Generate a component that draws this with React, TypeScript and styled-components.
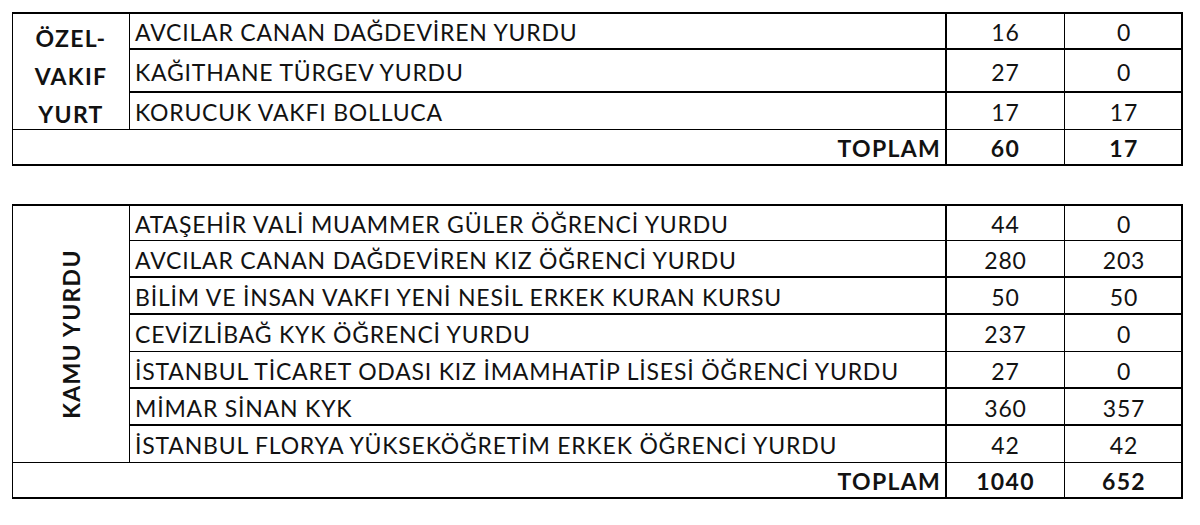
import React from "react";
import styled, { createGlobalStyle } from "styled-components";

const Global = createGlobalStyle`
  html, body { margin: 0; padding: 0; background: #fff; }
  body { font-family: Lato, "Liberation Sans", sans-serif; color: #121212; }
`;

const Page = styled.div`
  padding: 12px 0 0 12px;
  display: flex;
  flex-direction: column;
  gap: 38px;
  width: 1171px;
`;

const Grid = styled.div<{ $rows: string }>`
  display: grid;
  grid-template-columns: 117px 817px 118px 118px;
  grid-template-rows: ${(p) => p.$rows};
  border-top: 2px solid #000;
  border-left: 1px solid #000;
  border-right: 2px solid #000;
  border-bottom: 2px solid #000;
  box-sizing: border-box;
  width: 1171px;
`;

const Cell = styled.div<{ $b?: number }>`
  box-sizing: border-box;
  border-bottom: ${(p) => p.$b ?? 0}px solid #000;
  display: flex;
  align-items: center;
  font-size: 23px;
  letter-spacing: 0.8px;
  white-space: nowrap;
  overflow: hidden;
`;

const GroupCell = styled(Cell)<{ $span: number }>`
  grid-row: span ${(p) => p.$span};
  border-right: 1px solid #000;
  justify-content: center;
  font-weight: 700;
  letter-spacing: 1.3px;
`;

const GroupStack = styled.div`
  text-align: center;
  line-height: 38px;
  padding-top: 8px;
`;

const Vertical = styled.div`
  transform: rotate(-90deg);
  white-space: nowrap;
  font-weight: 700;
`;

const NameCell = styled(Cell)`
  border-right: 2px solid #000;
  padding-left: 5px;
  padding-top: 2px;
`;

const NumCell = styled(Cell)<{ $last?: boolean; $bold?: boolean }>`
  justify-content: center;
  border-right: ${(p) => (p.$last ? 0 : 1)}px solid #000;
  font-weight: ${(p) => (p.$bold ? 700 : 400)};
  letter-spacing: ${(p) => (p.$bold ? 1.3 : 0.8)}px;
  padding-top: 2px;
`;

const TotalLabel = styled(Cell)`
  grid-column: span 2;
  justify-content: flex-end;
  border-right: 2px solid #000;
  font-weight: 700;
  letter-spacing: 1.3px;
  padding-right: 4px;
  padding-top: 2px;
`;

type Row = { name: string; a: string; b: string; line: number };

const ozel: Row[] = [
  { name: "AVCILAR CANAN DAĞDEVİREN YURDU", a: "16", b: "0", line: 2 },
  { name: "KAĞITHANE TÜRGEV YURDU", a: "27", b: "0", line: 2 },
  { name: "KORUCUK VAKFI BOLLUCA", a: "17", b: "17", line: 1 },
];

const kamu: Row[] = [
  { name: "ATAŞEHİR VALİ MUAMMER GÜLER ÖĞRENCİ YURDU", a: "44", b: "0", line: 1 },
  { name: "AVCILAR CANAN DAĞDEVİREN KIZ ÖĞRENCİ YURDU", a: "280", b: "203", line: 2 },
  { name: "BİLİM VE İNSAN VAKFI YENİ NESİL ERKEK KURAN KURSU", a: "50", b: "50", line: 2 },
  { name: "CEVİZLİBAĞ KYK ÖĞRENCİ YURDU", a: "237", b: "0", line: 1 },
  { name: "İSTANBUL TİCARET ODASI KIZ İMAMHATİP LİSESİ ÖĞRENCİ YURDU", a: "27", b: "0", line: 2 },
  { name: "MİMAR SİNAN KYK", a: "360", b: "357", line: 2 },
  { name: "İSTANBUL FLORYA YÜKSEKÖĞRETİM ERKEK ÖĞRENCİ YURDU", a: "42", b: "42", line: 1 },
];

const Rows = ({ rows }: { rows: Row[] }) => (
  <>
    {rows.map((r) => (
      <React.Fragment key={r.name}>
        <NameCell $b={r.line}>{r.name}</NameCell>
        <NumCell $b={r.line}>{r.a}</NumCell>
        <NumCell $b={r.line} $last>
          {r.b}
        </NumCell>
      </React.Fragment>
    ))}
  </>
);

export default function App() {
  return (
    <>
      <Global />
      <Page>
        <Grid $rows="36px 43px 37px 34px">
          <GroupCell $span={3} $b={1}>
            <GroupStack>
              ÖZEL-
              <br />
              VAKIF
              <br />
              YURT
            </GroupStack>
          </GroupCell>
          <Rows rows={ozel} />
          <TotalLabel>TOPLAM</TotalLabel>
          <NumCell $bold>60</NumCell>
          <NumCell $bold $last>17</NumCell>
        </Grid>
        <Grid $rows="35px 37px 37px 37px 37px 37px 37px 34px">
          <GroupCell $span={7} $b={1}>
            <Vertical>KAMU YURDU</Vertical>
          </GroupCell>
          <Rows rows={kamu} />
          <TotalLabel>TOPLAM</TotalLabel>
          <NumCell $bold>1040</NumCell>
          <NumCell $bold $last>652</NumCell>
        </Grid>
      </Page>
    </>
  );
}
